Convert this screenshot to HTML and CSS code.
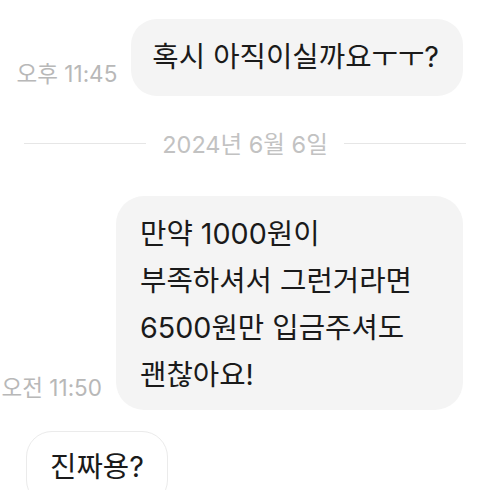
FILE: index.html
```html
<!DOCTYPE html>
<html lang="ko">
<head>
    <meta charset="UTF-8">
    <title>채팅</title>
    <link rel="stylesheet" href="styles.css">
</head>
<body>
    <div class="chat">
        <div class="row mine first">
            <span class="time">오후 11:45</span>
            <div class="bubble">혹시 아직이실까요ㅜㅜ?</div>
        </div>

        <div class="date-line">
            <span class="rule"></span>
            <span class="date">2024년 6월 6일</span>
            <span class="rule"></span>
        </div>

        <div class="row mine">
            <span class="time">오전 11:50</span>
            <div class="bubble multi">만약 1000원이<br>부족하셔서 그런거라면<br>6500원만 입금주셔도<br>괜찮아요!</div>
        </div>

        <div class="row theirs">
            <div class="bubble other">진짜용?</div>
        </div>
    </div>
</body>
</html>
```

FILE: styles.css
```css
body {
    margin: 0;
    background: #fff;
    font-family: Inter, "Noto Sans CJK KR", sans-serif;
    color: #1a1a1a;
    overflow: hidden;
}

.chat {
    display: flex;
    flex-direction: column;
    padding: 19px 27px 0 26px;
}

.row {
    display: flex;
    align-items: flex-end;
}

.row.mine {
    justify-content: flex-end;
    gap: 14px;
}

.time {
    flex-shrink: 0;
    font-size: 22.5px;
    color: #b8b8b8;
    white-space: nowrap;
    margin-bottom: 8px;
}

.bubble {
    flex-shrink: 0;
    white-space: nowrap;
    background: #f4f4f4;
    border-radius: 26px;
    font-size: 28.7px;
    line-height: 36px;
    padding: 20px 24px 21px 21px;
}

.bubble.multi {
    width: 299px;
    line-height: 47px;
    padding: 14px 24px 12px 24px;
    border-radius: 28px;
}

.date-line {
    display: flex;
    align-items: center;
    gap: 16px;
    margin: 30px -3px 36px -2px;
}

.rule {
    flex: 1;
    height: 1px;
    background: #e6e6e6;
}

.date {
    font-size: 23.5px;
    color: #c2c2c2;
}

.theirs {
    margin-top: 21px;
}

.bubble.other {
    background: #fff;
    border: 1px solid #ebebeb;
    padding: 17px 23px 20px 23px;
}
```
